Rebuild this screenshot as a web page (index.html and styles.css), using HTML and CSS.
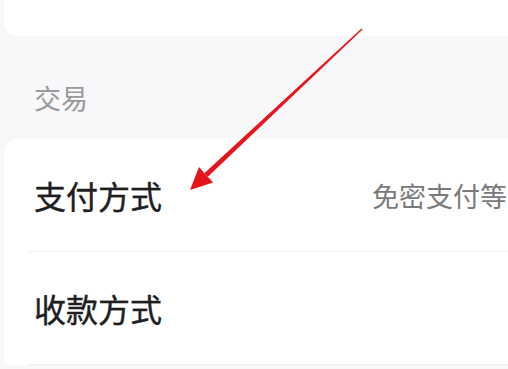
FILE: index.html
```html
<!DOCTYPE html>
<html lang="zh">
<head>
<meta charset="utf-8">
<link rel="stylesheet" href="styles.css">
</head>
<body>
<div class="page">
  <div class="card-top"></div>
  <div class="section-label">交易</div>
  <div class="card">
    <div class="row">
      <span class="row-title">支付方式</span>
      <span class="row-value">免密支付等</span>
    </div>
    <div class="row">
      <span class="row-title">收款方式</span>
    </div>
  </div>
  <svg class="arrow" width="508" height="369" viewBox="0 0 508 369">
    <polygon points="362.5,29.5 361.5,28.5 204.3,173.2 207.9,176.8" fill="#e8141c"/>
    <polygon points="190,190 213,182.5 208.5,177.5 206,175 199,167" fill="#e8141c"/>
  </svg>
</div>
</body>
</html>
```
FILE: styles.css
```css
html, body {
  margin: 0;
  padding: 0;
}
body {
  width: 508px;
  height: 369px;
  overflow: hidden;
  background: #f8f7fa;
  font-family: "Noto Sans CJK SC", "Noto Sans", sans-serif;
}
.page {
  position: relative;
  width: 508px;
  height: 369px;
}
.card-top {
  height: 36px;
  margin-left: 4px;
  background: #ffffff;
  border-radius: 0 0 0 14px;
}
.section-label {
  height: 84px;
  padding-top: 19px;
  padding-left: 34px;
  display: flex;
  align-items: center;
  font-size: 27px;
  color: #9a9a9a;
}
.card {
  margin-left: 4px;
  background: #ffffff;
  border-radius: 14px 0 0 0;
  padding-left: 24px;
}
.row {
  height: 112px;
  display: flex;
  align-items: center;
  border-bottom: 1px solid #f1f0f3;
}
.row-title {
  margin-left: 6px;
  font-size: 32px;
  font-weight: 400;
  color: #1e1e1e;
  -webkit-text-stroke: 0.4px #1e1e1e;
}
.row-value {
  margin-left: auto;
  margin-right: 1px;
  font-size: 27px;
  color: #7a7a7a;
  white-space: nowrap;
}
.arrow {
  position: absolute;
  left: 0;
  top: 0;
}
```
